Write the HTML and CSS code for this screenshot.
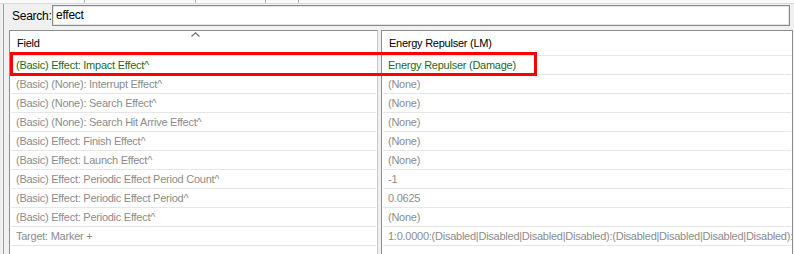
FILE: index.html
```html
<!DOCTYPE html>
<html lang="en">
<head>
  <meta charset="UTF-8">
  <title>Field Search</title>
  <link rel="stylesheet" href="styles.css">
</head>
<body>
  <div class="window">
    <div class="tabstrip">
      <span class="tab t1"></span>
      <span class="tab t2"></span>
      <span class="tab t3"></span>
      <span class="tab t4"></span>
    </div>
    <div class="panel">
      <div class="search">
        <label>Search:</label>
        <div class="search-box">effect</div>
      </div>
      <div class="grid">
        <div class="col col-field">
          <div class="head">Field
            <svg class="sort" width="9" height="5" viewBox="0 0 9 5"><path d="M0.5 4.5 L4.5 0.8 L8.5 4.5" fill="none" stroke="#707070" stroke-width="1.2"/></svg>
          </div>
          <div class="row match">(Basic) Effect: Impact Effect^</div>
          <div class="row">(Basic) (None): Interrupt Effect^</div>
          <div class="row">(Basic) (None): Search Effect^</div>
          <div class="row">(Basic) (None): Search Hit Arrive Effect^</div>
          <div class="row">(Basic) Effect: Finish Effect^</div>
          <div class="row">(Basic) Effect: Launch Effect^</div>
          <div class="row">(Basic) Effect: Periodic Effect Period Count^</div>
          <div class="row">(Basic) Effect: Periodic Effect Period^</div>
          <div class="row">(Basic) Effect: Periodic Effect^</div>
          <div class="row">Target: Marker +</div>
        </div>
        <div class="col col-value">
          <div class="head">Energy Repulser (LM)</div>
          <div class="row match">Energy Repulser (Damage)</div>
          <div class="row">(None)</div>
          <div class="row">(None)</div>
          <div class="row">(None)</div>
          <div class="row">(None)</div>
          <div class="row">(None)</div>
          <div class="row">-1</div>
          <div class="row">0.0625</div>
          <div class="row">(None)</div>
          <div class="row">1:0.0000:(Disabled|Disabled|Disabled|Disabled):(Disabled|Disabled|Disabled|Disabled):</div>
        </div>
      </div>
    </div>
    <div class="highlight"></div>
  </div>
</body>
</html>
```

FILE: styles.css
```css
body {
  margin: 0;
  background: #f0f0f0;
  font-family: "Liberation Sans", Arial, sans-serif;
  font-size: 11px;
  letter-spacing: -0.25px;
}
.window {
  position: relative;
  width: 794px;
  height: 254px;
  overflow: hidden;
  background: #f0f0f0;
}
.tabstrip {
  display: flex;
  height: 3px;
  background: #fafafa;
  border-bottom: 1px solid #dadada;
}
.tab {
  border-right: 1px solid #b4b4b4;
}
.t1 { width: 84px; }
.t2 { width: 110px; }
.t3 { width: 69px; }
.t4 { width: 32px; }
.panel {
  margin-left: 3px;
  border-left: 1px solid #a0a0a0;
  padding: 1px 0 0 5px;
  height: 250px;
}
.search {
  display: flex;
  align-items: center;
  height: 21px;
}
.search label {
  width: 40px;
  margin-left: 3px;
  color: #000;
  font-size: 12px;
}
.search-box {
  box-sizing: border-box;
  width: 738px;
  height: 21px;
  border: 1px solid #8a8a8a;
  box-shadow: inset 0 0 0 1px #e3e3e3;
  background: #fff;
  padding: 2px 0 0 3px;
  line-height: 15px;
  color: #000;
  font-size: 12px;
}
.grid {
  display: grid;
  grid-template-columns: 369px 412px;
  column-gap: 3px;
  margin-top: 4px;
}
.col {
  box-sizing: border-box;
  height: 230px;
  background: #fff;
  border: 1px solid #8f8f8f;
  border-bottom: none;
  overflow: hidden;
  white-space: nowrap;
}
.col-field {
  border-right-color: #c8c8c8;
}
.head {
  position: relative;
  height: 24px;
  line-height: 25px;
  padding-left: 7px;
  border-bottom: 1px solid #e8e8e8;
  color: #000;
}
.sort {
  position: absolute;
  left: 181px;
  top: 1px;
}
.row {
  height: 18px;
  line-height: 18px;
  padding-left: 5px;
  margin: 0 1px;
  border-bottom: 1px solid #e6e6e6;
  color: #8c8c8c;
}
.row.match {
  color: #1f6a1f;
}
.highlight {
  position: absolute;
  left: 10px;
  top: 52px;
  width: 527px;
  height: 24px;
  box-sizing: border-box;
  border: 3px solid #ff0000;
}
```
